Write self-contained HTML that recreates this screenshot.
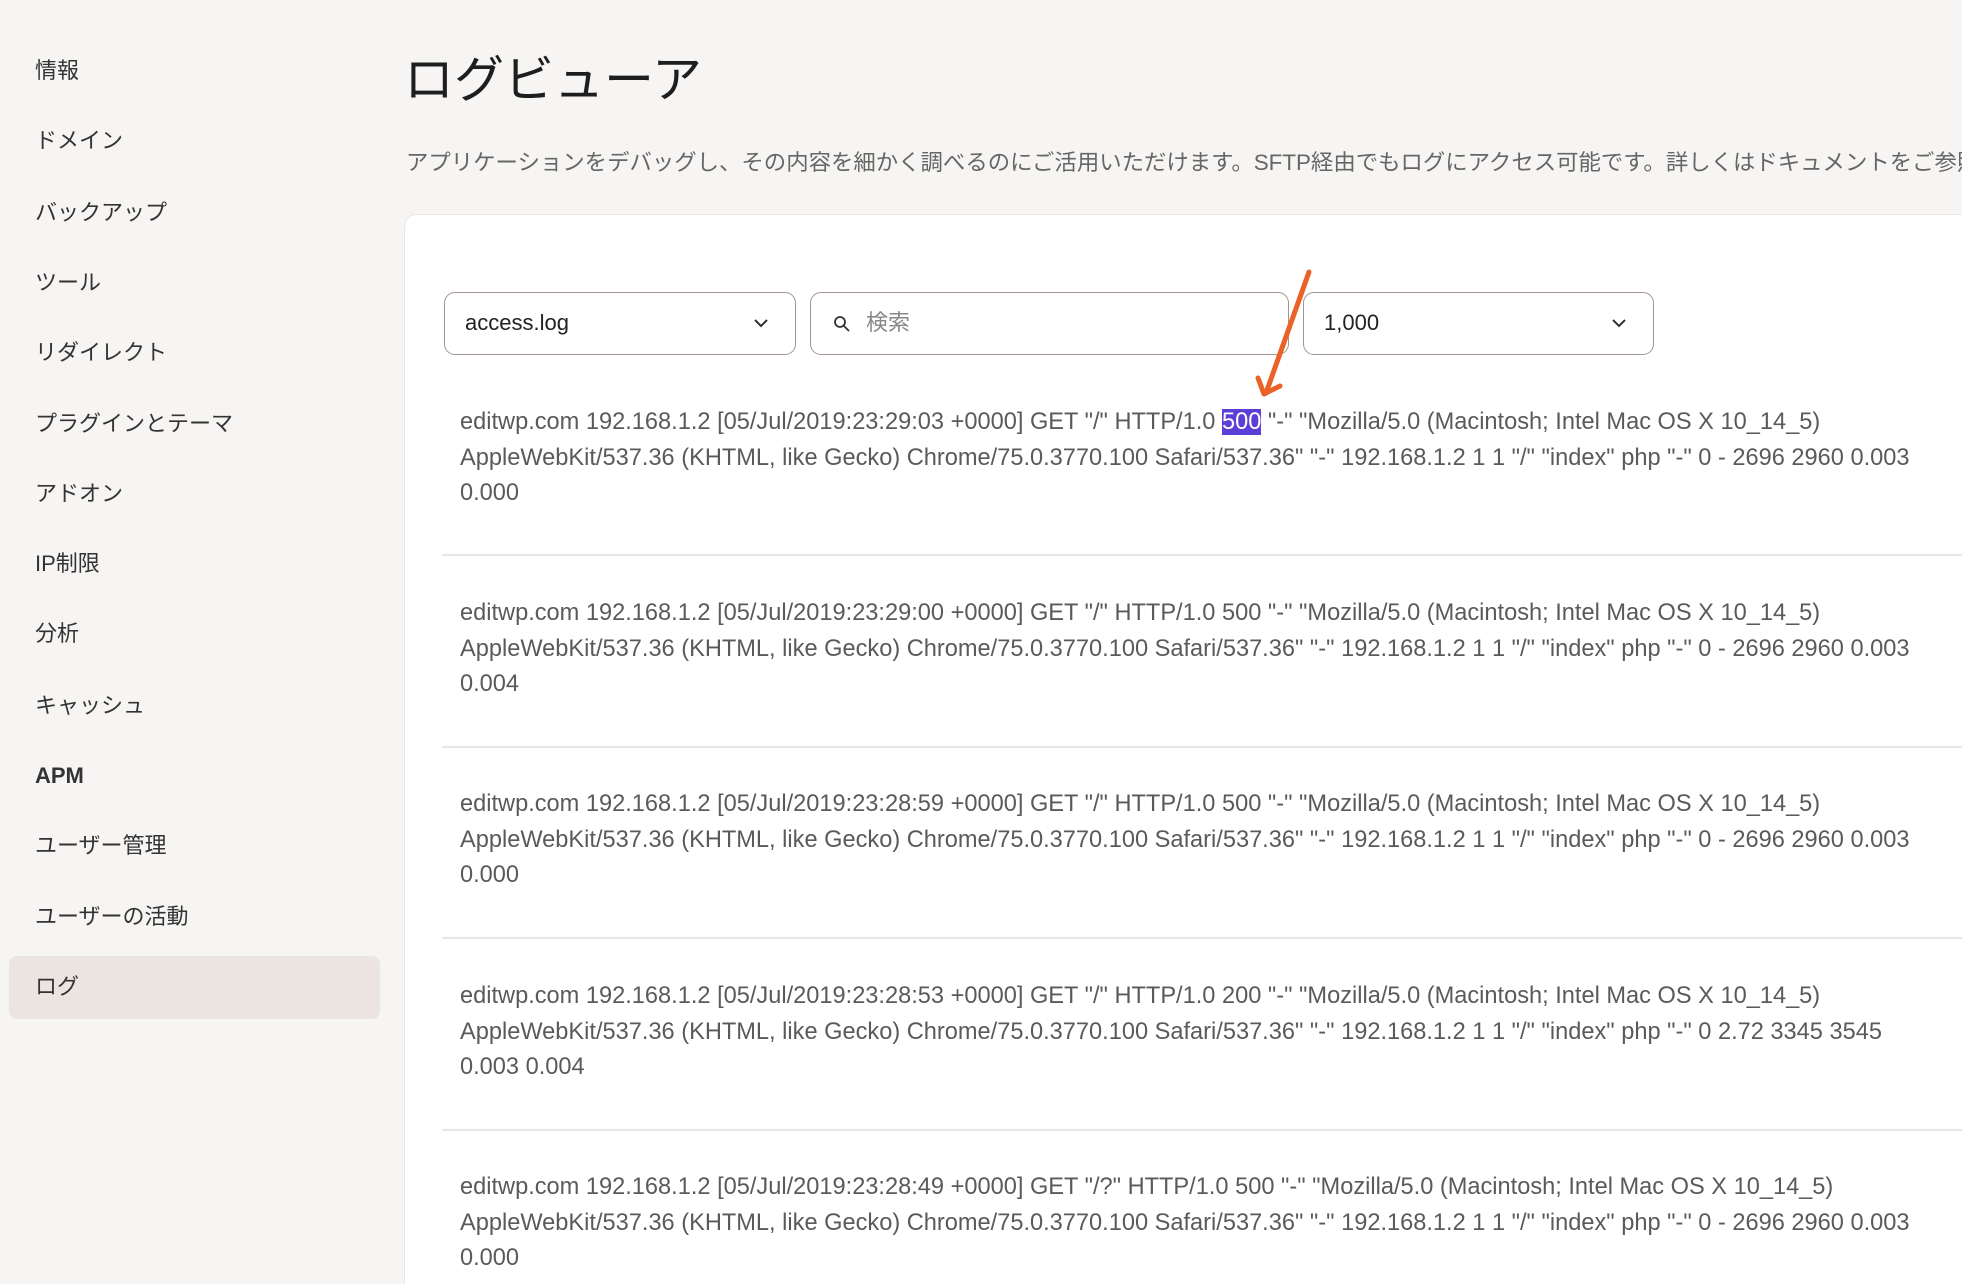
<!DOCTYPE html>
<html style="overflow:hidden;height:1284px"><head><meta charset="utf-8"><style>
*{margin:0;padding:0;box-sizing:border-box}
body{width:1962px;height:1284px;overflow:hidden;background:#f7f5f3;font-family:"Liberation Sans","Noto Sans CJK JP",sans-serif;color:#222;position:relative}
.nav{position:absolute;left:35px;font-size:22px;color:#333;line-height:28px}
.act{position:absolute;left:9px;top:956px;width:371px;height:63px;background:#ebe4e0;border-radius:8px}
h1{position:absolute;left:404px;top:40px;font-size:50px;font-weight:400;color:#1e1e1e}
.subw{position:absolute;left:406px;top:145px;width:1556px;height:34px;overflow:hidden}
.sub{font-size:22.4px;color:#666;white-space:nowrap}
.card{position:absolute;left:404px;top:214px;width:1558px;height:1070px;background:#fff;border:1px solid #ece6e2;border-bottom:none;border-right:none;border-radius:12px 0 0 0;overflow:hidden}
.sel{position:absolute;top:292px;height:63px;border:1.5px solid #a3958f;border-radius:11px;background:#fff;font-size:22px;line-height:60px;padding-left:20px;color:#222}
.chev{position:absolute;right:26px;top:24px}
.e{position:absolute;left:460px;font-size:23.6px;line-height:35.5px;color:#5a5a5a;white-space:nowrap}
.sep{position:absolute;left:442px;width:1520px;height:1.5px;background:#e7e7e7}
.hl{background:#5b3fd6;color:#fff}
</style></head><body>
<div class="act"></div>
<div class="nav" style="top:57px">情報</div>
<div class="nav" style="top:127px">ドメイン</div>
<div class="nav" style="top:199px">バックアップ</div>
<div class="nav" style="top:269px">ツール</div>
<div class="nav" style="top:339px">リダイレクト</div>
<div class="nav" style="top:410px">プラグインとテーマ</div>
<div class="nav" style="top:480px">アドオン</div>
<div class="nav" style="top:550px">IP制限</div>
<div class="nav" style="top:620px">分析</div>
<div class="nav" style="top:692px">キャッシュ</div>
<div class="nav" style="top:762px;font-weight:700">APM</div>
<div class="nav" style="top:832px">ユーザー管理</div>
<div class="nav" style="top:903px">ユーザーの活動</div>
<div class="nav" style="top:973px">ログ</div>
<h1>ログビューア</h1>
<div class="subw"><div class="sub">アプリケーションをデバッグし、その内容を細かく調べるのにご活用いただけます。SFTP経由でもログにアクセス可能です。詳しくはドキュメントをご参照ください。</div></div>
<div class="card"></div>
<div class="sel" style="left:444px;width:352px">access.log<svg class="chev" width="16" height="12" viewBox="0 0 16 12"><path d="M2 3l6 6 6-6" fill="none" stroke="#333" stroke-width="2"/></svg></div>
<div class="sel" style="left:810px;width:479px;color:#888;padding-left:55px"><svg style="position:absolute;left:22px;top:22px" width="18" height="18" viewBox="0 0 18 18"><circle cx="7" cy="7" r="5" fill="none" stroke="#333" stroke-width="1.8"/><path d="M11 11l5 5" stroke="#333" stroke-width="1.8"/></svg>検索</div>
<div class="sel" style="left:1303px;width:351px">1,000<svg class="chev" width="16" height="12" viewBox="0 0 16 12"><path d="M2 3l6 6 6-6" fill="none" stroke="#333" stroke-width="2"/></svg></div>

<div class="e" style="top:405px">editwp.com 192.168.1.2 [05/Jul/2019:23:29:03 +0000] GET "/" HTTP/1.0 <span class="hl">500</span> "-" "Mozilla/5.0 (Macintosh; Intel Mac OS X 10_14_5)<br>AppleWebKit/537.36 (KHTML, like Gecko) Chrome/75.0.3770.100 Safari/537.36" "-" 192.168.1.2 1 1 "/" "index" php "-" 0 - 2696 2960 0.003<br>0.000</div>
<div class="sep" style="top:554px"></div>
<div class="e" style="top:596px">editwp.com 192.168.1.2 [05/Jul/2019:23:29:00 +0000] GET "/" HTTP/1.0 500 "-" "Mozilla/5.0 (Macintosh; Intel Mac OS X 10_14_5)<br>AppleWebKit/537.36 (KHTML, like Gecko) Chrome/75.0.3770.100 Safari/537.36" "-" 192.168.1.2 1 1 "/" "index" php "-" 0 - 2696 2960 0.003<br>0.004</div>
<div class="sep" style="top:746px"></div>
<div class="e" style="top:787px">editwp.com 192.168.1.2 [05/Jul/2019:23:28:59 +0000] GET "/" HTTP/1.0 500 "-" "Mozilla/5.0 (Macintosh; Intel Mac OS X 10_14_5)<br>AppleWebKit/537.36 (KHTML, like Gecko) Chrome/75.0.3770.100 Safari/537.36" "-" 192.168.1.2 1 1 "/" "index" php "-" 0 - 2696 2960 0.003<br>0.000</div>
<div class="sep" style="top:937px"></div>
<div class="e" style="top:979px">editwp.com 192.168.1.2 [05/Jul/2019:23:28:53 +0000] GET "/" HTTP/1.0 200 "-" "Mozilla/5.0 (Macintosh; Intel Mac OS X 10_14_5)<br>AppleWebKit/537.36 (KHTML, like Gecko) Chrome/75.0.3770.100 Safari/537.36" "-" 192.168.1.2 1 1 "/" "index" php "-" 0 2.72 3345 3545<br>0.003 0.004</div>
<div class="sep" style="top:1129px"></div>
<div class="e" style="top:1170px">editwp.com 192.168.1.2 [05/Jul/2019:23:28:49 +0000] GET "/?" HTTP/1.0 500 "-" "Mozilla/5.0 (Macintosh; Intel Mac OS X 10_14_5)<br>AppleWebKit/537.36 (KHTML, like Gecko) Chrome/75.0.3770.100 Safari/537.36" "-" 192.168.1.2 1 1 "/" "index" php "-" 0 - 2696 2960 0.003<br>0.000</div>

<svg style="position:absolute;left:0;top:0" width="1962" height="1284"><path d="M1309 272 L1266 393" stroke="#ea6227" stroke-width="5" stroke-linecap="round" fill="none"/><path d="M1258 378 L1264 394 L1280 386" stroke="#ea6227" stroke-width="5" stroke-linecap="round" stroke-linejoin="round" fill="none"/></svg>
</body></html>
